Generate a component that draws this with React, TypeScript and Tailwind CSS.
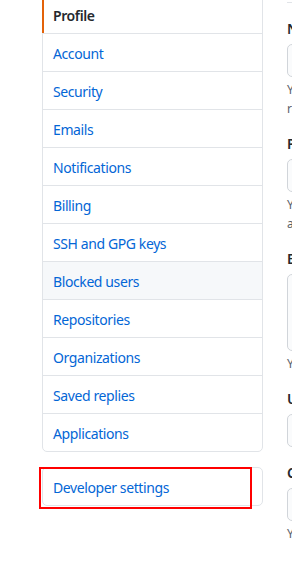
const items = [
  "Account",
  "Security",
  "Emails",
  "Notifications",
  "Billing",
  "SSH and GPG keys",
  "Blocked users",
  "Repositories",
  "Organizations",
  "Saved replies",
  "Applications",
];

const font = { fontFamily: '"Noto Sans", "Liberation Sans", sans-serif' };

function Field({
  label,
  tall,
  note,
}: {
  label: string;
  tall?: boolean;
  note?: string[];
}) {
  return (
    <div className="mt-[16px]">
      <div className="text-[14px] leading-[20px] font-semibold text-[#24292e]">{label}</div>
      <div
        className={`mt-[5px] w-[400px] rounded-[5px] border border-[#d1d5da] bg-[#fafbfc] ${
          tall ? "h-[77px]" : "h-[33px]"
        }`}
      />
      {note && (
        <div className="mt-[3px] text-[12px] leading-[19px] text-[#586069]">
          {note.map((line) => (
            <div key={line} className="whitespace-nowrap">
              {line}
            </div>
          ))}
        </div>
      )}
    </div>
  );
}

export default function App() {
  return (
    <div className="w-[292px] h-[563px] overflow-hidden bg-white" style={font}>
      <div className="-mt-[5px] flex pl-[42px]">
        {/* Settings nav */}
        <div className="w-[221px] shrink-0 tracking-[-0.4px]">
          <div className="rounded-[5px] border border-[#e1e4e8]">
            <div className="relative h-[37px] pl-[10px] pt-[2px] flex items-center text-[14px] font-semibold text-[#24292e]">
              <span className="absolute -left-px top-0 bottom-0 w-[2px] bg-[#e36209]" />
              Profile
            </div>
            {items.map((item) => (
              <div
                key={item}
                className={`h-[38px] border-t border-[#e1e4e8] pl-[10px] pt-[2px] flex items-center text-[14px] text-[#0366d6] ${
                  item === "Blocked users" ? "bg-[#f6f8fa]" : ""
                }`}
              >
                {item}
              </div>
            ))}
          </div>

          <div className="relative mt-[15px] h-[39px] rounded-[5px] border border-[#e1e4e8] pl-[10px] pt-[2px] flex items-center text-[14px] text-[#0366d6]">
            Developer settings
            <span className="absolute -left-[4px] -top-px w-[213px] h-[42px] border-2 border-[#ff0000]" />
          </div>
        </div>

        {/* Profile form */}
        <div className="ml-[24px] w-[420px] shrink-0">
          <div className="h-[8px] border-b border-[#e1e4e8]" />
          <Field
            label="Name"
            note={[
              "Your name may appear around GitHub where you contribute or are mentioned. You can",
              "remove it at any time.",
            ]}
          />
          <Field
            label="Public email"
            note={[
              "You have set your email address to private. To toggle email privacy, go to email settings",
              "and uncheck \"Keep my email address private.\"",
            ]}
          />
          <Field
            label="Bio"
            tall
            note={["You can @mention other users and organizations to link to them."]}
          />
          <Field label="URL" />
          <Field
            label="Company"
            note={["You can @mention your company's GitHub organization to link it."]}
          />
        </div>
      </div>
    </div>
  );
}
